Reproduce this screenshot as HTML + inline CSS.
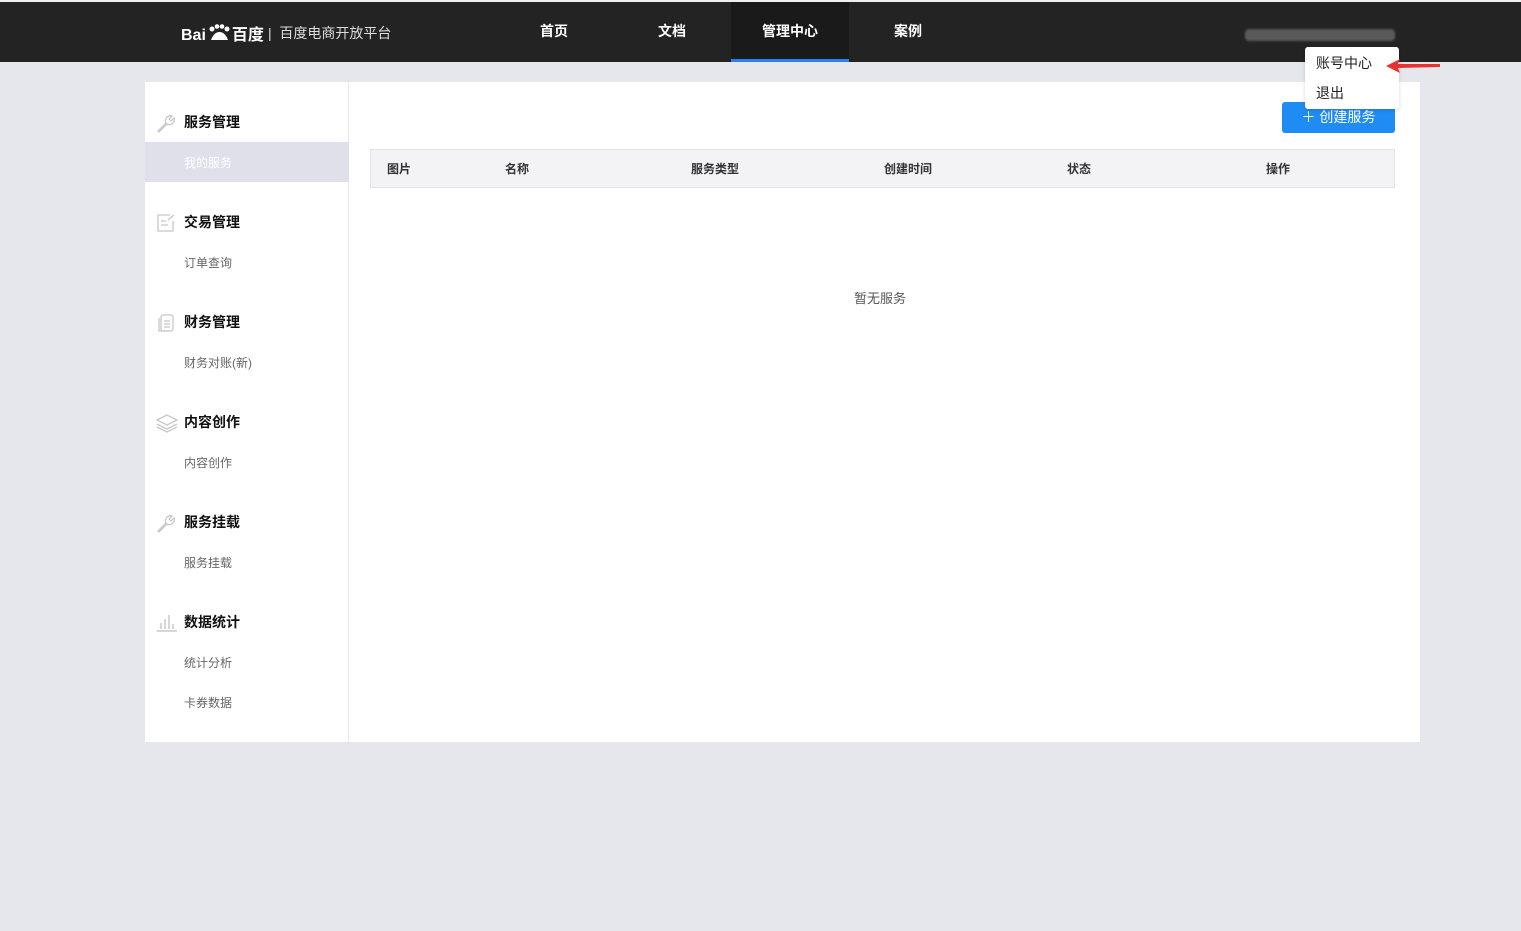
<!DOCTYPE html>
<html><head><meta charset="utf-8"><style>
*{margin:0;padding:0;box-sizing:border-box}
body{width:1521px;height:931px;background:#e6e7ec;font-family:"Liberation Sans","Noto Sans CJK SC",sans-serif;position:relative;overflow:hidden}
.top{position:absolute;left:0;top:2px;width:1521px;height:60px;background:#232323}
.topline{position:absolute;left:0;top:0;width:1521px;height:2px;background:#f0f0f0}
.logo{position:absolute;left:181px;top:19px;color:#fff;font-weight:bold;font-size:16px}
.sub{position:absolute;left:268px;top:21px;color:#ddd;font-size:14px}
.nav{position:absolute;top:0;height:60px;line-height:58px;color:#fff;font-size:14px;font-weight:bold;text-align:center;width:118px}
.act{background:#1a1a1a;border-bottom:3px solid #2a7ff0}
.blur{position:absolute;left:1245px;top:29px;width:150px;height:12px;background:#5a5a5a;border-radius:4px;filter:blur(1px)}
.drop{position:absolute;left:1305px;top:47px;width:94px;height:62px;background:#fff;border-radius:3px;box-shadow:0 1px 4px rgba(0,0,0,.15);z-index:3;font-size:14px;color:#222}
.drop div{position:absolute;left:11px}
.main{position:absolute;left:145px;top:82px;width:1275px;height:660px;background:#fff}
.side{position:absolute;left:0;top:0;width:204px;height:660px;border-right:1px solid #e8e8ee}
.h{position:absolute;left:39px;font-size:14px;font-weight:bold;color:#111}
.i{position:absolute;left:39px;font-size:12px;color:#666}
.ic{position:absolute;left:11px}
.sel{position:absolute;left:0;top:60px;width:204px;height:40px;background:#e0e0ea}
.btn{position:absolute;left:1137px;top:20px;width:113px;height:31px;background:#1f8cf5;color:#fff;border-radius:3px;font-size:14px;line-height:31px;text-align:center}
.th{position:absolute;left:225px;top:67px;width:1025px;height:39px;background:#f3f3f6;border:1px solid #e3e3e8;font-size:12px;font-weight:bold;color:#333}
.th span{position:absolute;top:10px}
.empty{position:absolute;left:709px;top:206px;font-size:13px;color:#555}
</style></head><body>
<div class="topline"></div>
<div class="top">
<div class="logo">Bai<svg width="26" height="18" style="vertical-align:-2px"><circle cx="6" cy="5" r="2.5" fill="#fff"/><circle cx="11" cy="2.5" r="2.3" fill="#fff"/><circle cx="16" cy="2.5" r="2.3" fill="#fff"/><circle cx="21" cy="5" r="2.5" fill="#fff"/><path d="M5 16 Q8 8 13.5 8 Q19 8 22 16 Z" fill="#fff"/></svg>百度</div>
<div class="sub">|&nbsp; 百度电商开放平台</div>
<div class="nav" style="left:495px">首页</div>
<div class="nav" style="left:613px">文档</div>
<div class="nav act" style="left:731px">管理中心</div>
<div class="nav" style="left:849px">案例</div>
</div>
<div class="blur"></div>
<div class="drop"><div style="top:6px">账号中心</div><div style="top:36px">退出</div></div>
<svg style="position:absolute;left:1386px;top:58px;z-index:4" width="56" height="16"><polygon points="0,8 14,1 12,6 54,6 54,9 12,10 14,15" fill="#e8322f"/></svg>
<div class="main">
<div class="side">
<svg class="ic" style="top:32px" width="20" height="20" fill="none" stroke="#c8c8c8" stroke-width="1.3"><path d="M2 17 L10 9 A5 5 0 0 1 16 2 L13 5 L15 7 L18 4 A5 5 0 0 1 11 10 L3 18 Z"/></svg>
<div class="h" style="top:30px">服务管理</div>
<div class="sel"></div><div class="i" style="top:72px;color:#fff">我的服务</div>
<svg class="ic" style="top:131px" width="20" height="20" fill="none" stroke="#c8c8c8" stroke-width="1.3"><path d="M14 2 H2 V18 H17 V8"/><path d="M5 8 H10 M5 12 H12 M12 7 L18 2"/></svg>
<div class="h" style="top:130px">交易管理</div>
<div class="i" style="top:172px">订单查询</div>
<svg class="ic" style="top:231px" width="20" height="20" fill="none" stroke="#c8c8c8" stroke-width="1.3"><rect x="5" y="2" width="12" height="16" rx="2"/><path d="M3 5 V18 H14 M8 8 H14 M8 11 H14 M8 14 H14"/></svg>
<div class="h" style="top:230px">财务管理</div>
<div class="i" style="top:272px">财务对账(新)</div>
<svg class="ic" style="top:331px" width="22" height="20" fill="none" stroke="#c8c8c8" stroke-width="1.3"><path d="M1 7 L11 2 L21 7 L11 12 Z M1 11 L11 16 L21 11 M1 14 L11 19 L21 14"/></svg>
<div class="h" style="top:330px">内容创作</div>
<div class="i" style="top:372px">内容创作</div>
<svg class="ic" style="top:432px" width="20" height="20" fill="none" stroke="#c8c8c8" stroke-width="1.3"><path d="M2 17 L10 9 A5 5 0 0 1 16 2 L13 5 L15 7 L18 4 A5 5 0 0 1 11 10 L3 18 Z"/></svg>
<div class="h" style="top:430px">服务挂载</div>
<div class="i" style="top:472px">服务挂载</div>
<svg class="ic" style="top:530px" width="22" height="20" fill="none" stroke="#c8c8c8" stroke-width="1.5"><path d="M1 19 H21 M5 17 V11 M9 17 V7 M13 17 V3 M17 17 V12"/></svg>
<div class="h" style="top:530px">数据统计</div>
<div class="i" style="top:572px">统计分析</div>
<div class="i" style="top:612px">卡券数据</div>
</div>
<div class="btn">＋ 创建服务</div>
<div class="th"><span style="left:16px">图片</span><span style="left:134px">名称</span><span style="left:320px">服务类型</span><span style="left:513px">创建时间</span><span style="left:696px">状态</span><span style="left:895px">操作</span></div>
<div class="empty">暂无服务</div>
</div>
</body></html>
